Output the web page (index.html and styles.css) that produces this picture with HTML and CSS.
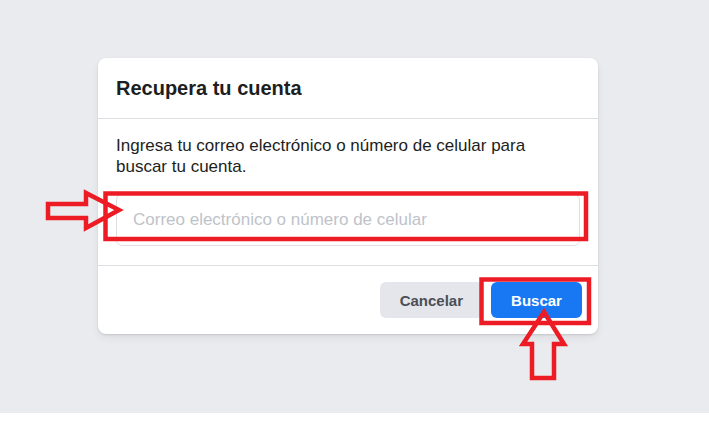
FILE: index.html
```html
<!DOCTYPE html>
<html lang="es">
<head>
    <meta charset="UTF-8">
    <meta name="viewport" content="width=device-width, initial-scale=1.0">
    <title>Recupera tu cuenta</title>
    <link rel="stylesheet" href="styles.css">
</head>
<body>
    <div class="page">
        <div class="card">
            <div class="card-header">
                <h2>Recupera tu cuenta</h2>
            </div>
            <div class="card-body">
                <p>Ingresa tu correo electrónico o número de celular para buscar tu cuenta.</p>
                <input type="text" class="search-input" placeholder="Correo electrónico o número de celular">
            </div>
            <div class="card-footer">
                <button class="btn btn-cancel">Cancelar</button>
                <button class="btn btn-search">Buscar</button>
            </div>
        </div>
    </div>

    <!-- marcas rojas encima de la captura -->
    <svg class="marks" width="709" height="448" viewBox="0 0 709 448">
        <rect x="105.5" y="193.5" width="480.5" height="45.5" />
        <rect x="481.5" y="279.5" width="107.5" height="43.5" />
        <polygon points="48,204 86,204 86,193 119,210 86,228 86,218 48,218" />
        <polygon points="544,312 564,344 554,344 554,378 532,378 532,344 523,344" />
    </svg>
</body>
</html>
```

FILE: styles.css
```css
body {
    margin: 0;
    padding: 0;
    background-color: #fff;
    font-family: "Liberation Sans", Arial, sans-serif;
    color: #1c1e21;
}

.page {
    height: 413px;
    box-sizing: border-box;
    padding: 58px 0 0 98px;
    background-color: #e9ebee;
}

.card {
    width: 500px;
    background-color: #fff;
    border-radius: 8px;
    box-shadow: 0 1px 2px rgba(0, 0, 0, 0.12), 0 4px 10px rgba(0, 0, 0, 0.06);
}

.card-header {
    padding: 18px 18px;
    border-bottom: 1px solid #dddfe2;
}

.card-header h2 {
    margin: 0;
    font-size: 20px;
    line-height: 24px;
    font-weight: bold;
    color: #1c1e21;
}

.card-body {
    padding: 16px 18px 19px;
}

.card-body p {
    margin: 0 0 17px;
    font-size: 17px;
    line-height: 21px;
    padding-right: 40px;
}

.search-input {
    display: block;
    width: 100%;
    height: 52px;
    box-sizing: border-box;
    padding: 0 16px;
    border: 1px solid #dddfe2;
    border-radius: 6px;
    font-family: inherit;
    font-size: 17px;
    color: #1c1e21;
    outline: none;
}

.search-input::placeholder {
    color: #bec3c9;
}

.card-footer {
    display: flex;
    justify-content: flex-end;
    gap: 8px;
    padding: 16px;
    border-top: 1px solid #dddfe2;
}

.btn {
    height: 36px;
    padding: 0 20px;
    border: none;
    border-radius: 6px;
    font-family: inherit;
    font-size: 15px;
    font-weight: bold;
    cursor: pointer;
}

.btn-cancel {
    background-color: #e4e6eb;
    color: #4b4f56;
}

.btn-search {
    width: 91px;
    background-color: #1877f2;
    color: #fff;
}

.marks {
    position: absolute;
    top: 0;
    left: 0;
    pointer-events: none;
}

.marks rect,
.marks polygon {
    fill: none;
    stroke: #ed1c24;
    stroke-width: 4.5;
}
```
